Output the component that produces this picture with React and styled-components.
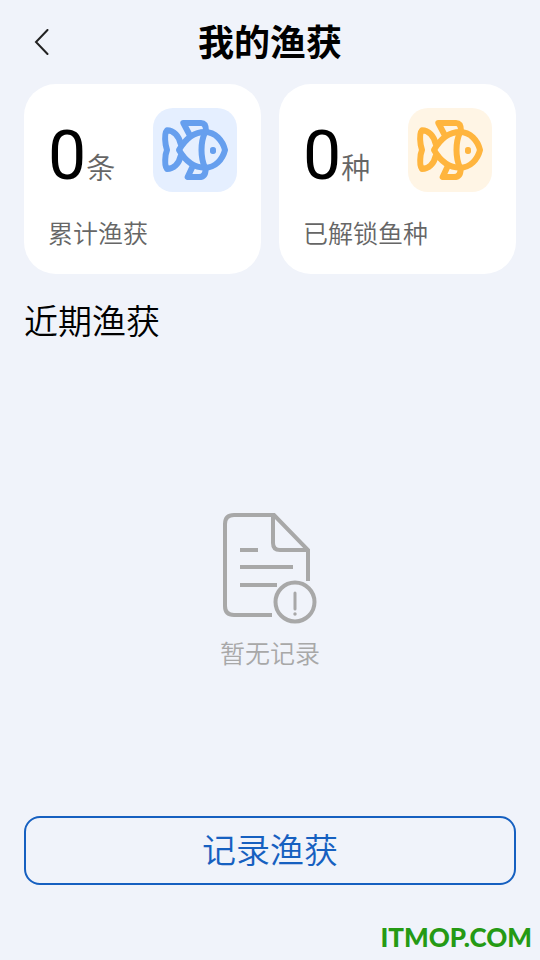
import React from "react";
import styled, { createGlobalStyle } from "styled-components";

const GlobalStyle = createGlobalStyle`
  * { box-sizing: border-box; }
  body {
    margin: 0;
    background: #f0f3fa;
    color: #000;
    font-family: Roboto, "Noto Sans CJK SC", sans-serif;
  }
`;

const Page = styled.div`
  min-height: 100vh;
  display: flex;
  flex-direction: column;
  padding: 0 24px;
`;

const Header = styled.header`
  height: 84px;
  display: grid;
  grid-template-columns: 36px 1fr 36px;
  align-items: center;
`;

const BackButton = styled.button`
  height: 36px;
  padding: 0;
  border: 0;
  background: none;
  display: flex;
  align-items: center;
  justify-content: center;
  cursor: pointer;
`;

const Title = styled.h1`
  margin: 0;
  padding-bottom: 4px;
  font: 700 36px/48px "Noto Sans CJK SC", sans-serif;
  text-align: center;
`;

const Stats = styled.section`
  display: grid;
  grid-template-columns: 1fr 1fr;
  gap: 18px;
`;

const Card = styled.article`
  height: 190px;
  padding: 24px;
  border-radius: 32px;
  background: #fff;
  display: flex;
  flex-direction: column;
  justify-content: space-between;
`;

const CardTop = styled.div`
  display: flex;
  justify-content: space-between;
  align-items: flex-start;
`;

const Count = styled.div`
  display: flex;
  align-items: baseline;
  padding-top: 8px;
  font-size: 68px;
  line-height: 80px;
`;

const Unit = styled.span`
  font: 350 29px/40px "Noto Sans CJK SC", sans-serif;
  color: #666;
`;

const Label = styled.div`
  padding-bottom: 2px;
  font: 350 25px/32px "Noto Sans CJK SC", sans-serif;
  color: #666;
`;

const Tile = styled.div`
  width: 84px;
  height: 84px;
  border-radius: 20px;
  background: ${(p) => p.$fill};
  color: ${(p) => p.$ink};
`;

const SectionTitle = styled.h2`
  margin: 22px 0 0;
  font: 350 34px/48px "Noto Sans CJK SC", sans-serif;
`;

const Empty = styled.section`
  flex: 1;
  display: flex;
  flex-direction: column;
  align-items: center;
  justify-content: center;
  gap: 10px;
  padding-top: 22px;
  color: #a8a8a8;
`;

const EmptyText = styled.p`
  margin: 0;
  font: 350 25px/36px "Noto Sans CJK SC", sans-serif;
`;

const RecordButton = styled.button`
  height: 69px;
  padding: 0 0 4px;
  border: 2px solid #1660c0;
  border-radius: 16px;
  background: none;
  color: #1660c0;
  font: 350 34px/48px "Noto Sans CJK SC", sans-serif;
  cursor: pointer;
`;

const Footer = styled.footer`
  height: 75px;
  margin-right: -16px;
  padding-bottom: 7px;
  display: flex;
  align-items: flex-end;
  justify-content: flex-end;
  color: #259a14;
  font: 900 26px/32px Lato, sans-serif;
`;

function Fish() {
  return (
    <svg width="84" height="84" viewBox="24 24 252 252" fill="none" stroke="currentColor" strokeWidth="18" strokeLinejoin="round" strokeLinecap="round" aria-hidden="true">
      <path d="M102 150C121 117 148 96 180 96C211 96 233 122 240 150C233 178 211 203 180 203C148 203 121 183 102 150Z" />
      <path d="M180 97C166 128 166 171 180 203" />
      <path d="M134 105L115 69H168Q183 69 183 93" />
      <path d="M141 203L128 231H162Q182 231 182 206" />
      <path d="M107 132C102 108 86 91 66 91C58 99 60 120 62 134L66 150L62 164C60 180 58 198 66 207C86 207 102 191 107 168" />
      <rect x="195" y="141" width="18" height="21" rx="8" fill="currentColor" stroke="none" />
    </svg>
  );
}

function EmptyDocument() {
  return (
    <svg width="96" height="112" viewBox="0 0 96 112" fill="none" stroke="currentColor" strokeWidth="4" aria-hidden="true">
      <path d="M50 103H12Q3 103 3 94V12Q3 3 12 3H52L86 38V69" />
      <path d="M51 3V31Q51 38 58 38H86" strokeLinejoin="round" />
      <path d="M18 38H36M18 55H71M18 73H55" />
      <circle cx="73" cy="90" r="19.5" />
      <path d="M73 81V97" strokeWidth="3" strokeLinecap="round" />
      <circle cx="73" cy="102" r="1.7" fill="currentColor" stroke="none" />
    </svg>
  );
}

const stats = [
  { unit: "条", label: "累计渔获", fill: "#e5efff", ink: "#669fee" },
  { unit: "种", label: "已解锁鱼种", fill: "#fff5e5", ink: "#ffb53e" },
];

export default function App() {
  return (
    <>
      <GlobalStyle />
      <Page>
        <Header>
          <BackButton type="button" aria-label="返回">
            <svg width="16" height="26" viewBox="0 0 16 26" fill="none" stroke="#222" strokeWidth="2" aria-hidden="true">
              <path d="M13.5 1L2 13L13.5 25" strokeLinecap="round" />
            </svg>
          </BackButton>
          <Title>我的渔获</Title>
        </Header>
        <Stats>
          {stats.map((s) => (
            <Card key={s.label}>
              <CardTop>
                <Count>0<Unit>{s.unit}</Unit></Count>
                <Tile $fill={s.fill} $ink={s.ink}><Fish /></Tile>
              </CardTop>
              <Label>{s.label}</Label>
            </Card>
          ))}
        </Stats>
        <SectionTitle>近期渔获</SectionTitle>
        <Empty>
          <EmptyDocument />
          <EmptyText>暂无记录</EmptyText>
        </Empty>
        <RecordButton type="button">记录渔获</RecordButton>
        <Footer>ITMOP.COM</Footer>
      </Page>
    </>
  );
}
